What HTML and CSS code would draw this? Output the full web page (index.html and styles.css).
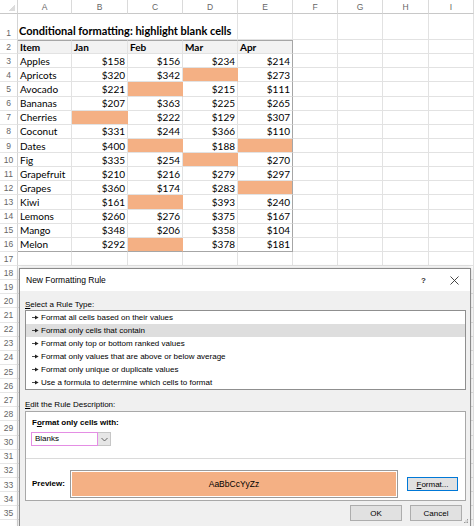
FILE: index.html
```html
<!DOCTYPE html>
<html>
<head>
<meta charset="utf-8">
<link rel="stylesheet" href="styles.css">
</head>
<body>
<div class="sheet">
  <div class="corner"></div>
  <div class="ch">A</div><div class="ch">B</div><div class="ch">C</div><div class="ch">D</div><div class="ch">E</div><div class="ch">F</div><div class="ch">G</div><div class="ch">H</div><div class="ch">I</div>

  <div class="rh">1</div><div class="c title">Conditional formatting: highlight blank cells</div><div class="c"></div><div class="c"></div><div class="c"></div><div class="c"></div><div class="c"></div>

  <div class="rh">2</div><div class="c hd tl">Item</div><div class="c hd tt">Jan</div><div class="c hd tt">Feb</div><div class="c hd tt">Mar</div><div class="c hd tt tr">Apr</div><div class="c"></div><div class="c"></div><div class="c"></div><div class="c"></div>

  <div class="rh">3</div><div class="c">Apples</div><div class="c n">$158</div><div class="c n">$156</div><div class="c n">$234</div><div class="c n tr">$214</div><div class="c"></div><div class="c"></div><div class="c"></div><div class="c"></div>
  <div class="rh">4</div><div class="c">Apricots</div><div class="c n">$320</div><div class="c n">$342</div><div class="c o"></div><div class="c n tr">$273</div><div class="c"></div><div class="c"></div><div class="c"></div><div class="c"></div>
  <div class="rh">5</div><div class="c">Avocado</div><div class="c n">$221</div><div class="c o"></div><div class="c n">$215</div><div class="c n tr">$111</div><div class="c"></div><div class="c"></div><div class="c"></div><div class="c"></div>
  <div class="rh">6</div><div class="c">Bananas</div><div class="c n">$207</div><div class="c n">$363</div><div class="c n">$225</div><div class="c n tr">$265</div><div class="c"></div><div class="c"></div><div class="c"></div><div class="c"></div>
  <div class="rh">7</div><div class="c">Cherries</div><div class="c o"></div><div class="c n">$222</div><div class="c n">$129</div><div class="c n tr">$307</div><div class="c"></div><div class="c"></div><div class="c"></div><div class="c"></div>
  <div class="rh">8</div><div class="c">Coconut</div><div class="c n">$331</div><div class="c n">$244</div><div class="c n">$366</div><div class="c n tr">$110</div><div class="c"></div><div class="c"></div><div class="c"></div><div class="c"></div>
  <div class="rh">9</div><div class="c">Dates</div><div class="c n">$400</div><div class="c o"></div><div class="c n">$188</div><div class="c o tr"></div><div class="c"></div><div class="c"></div><div class="c"></div><div class="c"></div>
  <div class="rh">10</div><div class="c">Fig</div><div class="c n">$335</div><div class="c n">$254</div><div class="c o"></div><div class="c n tr">$270</div><div class="c"></div><div class="c"></div><div class="c"></div><div class="c"></div>
  <div class="rh">11</div><div class="c">Grapefruit</div><div class="c n">$210</div><div class="c n">$216</div><div class="c n">$279</div><div class="c n tr">$297</div><div class="c"></div><div class="c"></div><div class="c"></div><div class="c"></div>
  <div class="rh">12</div><div class="c">Grapes</div><div class="c n">$360</div><div class="c n">$174</div><div class="c n">$283</div><div class="c o tr"></div><div class="c"></div><div class="c"></div><div class="c"></div><div class="c"></div>
  <div class="rh">13</div><div class="c">Kiwi</div><div class="c n">$161</div><div class="c o"></div><div class="c n">$393</div><div class="c n tr">$240</div><div class="c"></div><div class="c"></div><div class="c"></div><div class="c"></div>
  <div class="rh">14</div><div class="c">Lemons</div><div class="c n">$260</div><div class="c n">$276</div><div class="c n">$375</div><div class="c n tr">$167</div><div class="c"></div><div class="c"></div><div class="c"></div><div class="c"></div>
  <div class="rh">15</div><div class="c">Mango</div><div class="c n">$348</div><div class="c n">$206</div><div class="c n">$358</div><div class="c n tr">$104</div><div class="c"></div><div class="c"></div><div class="c"></div><div class="c"></div>
  <div class="rh">16</div><div class="c bb">Melon</div><div class="c n bb">$292</div><div class="c o bb"></div><div class="c n bb">$378</div><div class="c n tr bb">$181</div><div class="c"></div><div class="c"></div><div class="c"></div><div class="c"></div>
  <div class="rh">17</div><div class="c"></div><div class="c"></div><div class="c"></div><div class="c"></div><div class="c"></div><div class="c"></div><div class="c"></div><div class="c"></div><div class="c"></div>

  <div class="rh">18</div><div class="c fill"></div>
  <div class="rh">19</div><div class="c fill"></div>
  <div class="rh">20</div><div class="c fill"></div>
  <div class="rh">21</div><div class="c fill"></div>
  <div class="rh">22</div><div class="c fill"></div>
  <div class="rh">23</div><div class="c fill"></div>
  <div class="rh">24</div><div class="c fill"></div>
  <div class="rh">25</div><div class="c fill"></div>
  <div class="rh">26</div><div class="c fill"></div>
  <div class="rh">27</div><div class="c fill"></div>
  <div class="rh">28</div><div class="c fill"></div>
  <div class="rh">29</div><div class="c fill"></div>
  <div class="rh">30</div><div class="c fill"></div>
  <div class="rh">31</div><div class="c fill"></div>
  <div class="rh">32</div><div class="c fill"></div>
  <div class="rh">33</div><div class="c fill"></div>
  <div class="rh">34</div><div class="c fill"></div>
  <div class="rh">35</div><div class="c fill"></div>
  <div class="rh"></div><div class="c fill"></div>
  <div class="rh"></div><div class="c fill"></div>
</div>

<div class="dlg">
  <div class="dlg-title">
    <span class="title-text">New Formatting Rule</span>
    <span class="help">?</span>
    <svg class="close" width="9" height="9" viewBox="0 0 9 9"><path d="M0.5 0.5L8.5 8.5M8.5 0.5L0.5 8.5" stroke="#333" stroke-width="0.9" fill="none"/></svg>
  </div>
  <div class="dlg-body">
    <div class="lbl"><u>S</u>elect a Rule Type:</div>
    <div class="list">
      <div class="item"><svg class="arr" width="7" height="5" viewBox="0 0 7 5"><path d="M0 2.5H3.5" stroke="#222" stroke-width="0.8"/><path d="M3 0.6L6.6 2.5L3 4.4Z" fill="#222"/></svg>Format all cells based on their values</div>
      <div class="item sel"><svg class="arr" width="7" height="5" viewBox="0 0 7 5"><path d="M0 2.5H3.5" stroke="#222" stroke-width="0.8"/><path d="M3 0.6L6.6 2.5L3 4.4Z" fill="#222"/></svg>Format only cells that contain</div>
      <div class="item"><svg class="arr" width="7" height="5" viewBox="0 0 7 5"><path d="M0 2.5H3.5" stroke="#222" stroke-width="0.8"/><path d="M3 0.6L6.6 2.5L3 4.4Z" fill="#222"/></svg>Format only top or bottom ranked values</div>
      <div class="item"><svg class="arr" width="7" height="5" viewBox="0 0 7 5"><path d="M0 2.5H3.5" stroke="#222" stroke-width="0.8"/><path d="M3 0.6L6.6 2.5L3 4.4Z" fill="#222"/></svg>Format only values that are above or below average</div>
      <div class="item"><svg class="arr" width="7" height="5" viewBox="0 0 7 5"><path d="M0 2.5H3.5" stroke="#222" stroke-width="0.8"/><path d="M3 0.6L6.6 2.5L3 4.4Z" fill="#222"/></svg>Format only unique or duplicate values</div>
      <div class="item"><svg class="arr" width="7" height="5" viewBox="0 0 7 5"><path d="M0 2.5H3.5" stroke="#222" stroke-width="0.8"/><path d="M3 0.6L6.6 2.5L3 4.4Z" fill="#222"/></svg>Use a formula to determine which cells to format</div>
    </div>
    <div class="lbl lbl2"><u>E</u>dit the Rule Description:</div>
    <div class="box">
      <div class="box-top">
        <div class="blbl">F<u>o</u>rmat only cells with:</div>
        <div class="combo">
          <div class="combo-field">Blanks</div>
          <div class="combo-btn"><svg width="7" height="5" viewBox="0 0 7 5"><path d="M0.5 1L3.5 4L6.5 1" stroke="#555" stroke-width="0.9" fill="none"/></svg></div>
        </div>
      </div>
      <div class="box-bottom">
        <div class="blbl plbl">Preview:</div>
        <div class="preview"><div class="preview-in">AaBbCcYyZz</div></div>
        <div class="btn fmt"><u>F</u>ormat...</div>
      </div>
    </div>
    <div class="btns">
      <div class="btn">OK</div>
      <div class="btn">Cancel</div>
    </div>
  </div>
  <svg class="grip" width="5" height="5" viewBox="0 0 5 5"><rect x="3" y="0" width="1" height="1" fill="#999"/><rect x="1.5" y="1.5" width="1" height="1" fill="#999"/><rect x="3" y="1.5" width="1" height="1" fill="#999"/><rect x="0" y="3" width="1" height="1" fill="#999"/><rect x="1.5" y="3" width="1" height="1" fill="#999"/><rect x="3" y="3" width="1" height="1" fill="#999"/></svg>
</div>
</body>
</html>
```
FILE: styles.css
```css
html, body {
  margin: 0;
  padding: 0;
  background: #fff;
  overflow: hidden;
}
body {
  width: 474px;
  height: 526px;
  position: relative;
}
.sheet {
  display: grid;
  grid-template-columns: 18px 54px 56px 55px 55px 55px 45px 45px 46px 45px;
  grid-template-rows: 14px 26px repeat(36, 14.13px);
  font-family: Lato, "Liberation Sans", sans-serif;
  font-size: 10px;
  color: #000;
}
.corner {
  box-sizing: border-box;
  border-right: 1px solid #d4d4d4;
  border-bottom: 1px solid #c8c8c8;
  background: linear-gradient(135deg, #fff 0, #fff 62%, #dcdcdc 63%, #dcdcdc 100%);
  background-size: 9px 9px;
  background-position: right 2px bottom 2px;
  background-repeat: no-repeat;
}
.ch {
  box-sizing: border-box;
  display: flex;
  align-items: center;
  justify-content: center;
  border-right: 1px solid #dadada;
  border-bottom: 1px solid #c8c8c8;
  color: #666;
  font-family: "Liberation Sans", sans-serif;
  font-size: 8.5px;
  background: #fff;
}
.rh {
  box-sizing: border-box;
  display: flex;
  align-items: flex-end;
  justify-content: center;
  border-right: 1px solid #d4d4d4;
  border-bottom: 1px solid #e6e6e6;
  color: #666;
  font-family: "Liberation Sans", sans-serif;
  font-size: 8.5px;
  line-height: 12px;
  padding-bottom: 0.5px;
}
.c {
  box-sizing: border-box;
  display: flex;
  align-items: flex-end;
  border-right: 1px solid #e2e2e2;
  border-bottom: 1px solid #e2e2e2;
  padding: 0 2px 0.5px 2px;
  line-height: 12px;
  white-space: nowrap;
  overflow: hidden;
}
.title {
  grid-column: span 4;
  font-weight: bold;
  font-size: 11px;
  overflow: visible;
  padding-bottom: 2px;
  padding-left: 1px;
}
.hd {
  font-weight: bold;
  background: #f2f2f2;
}
.tt {
  border-top: 1px solid #a6a6a6;
}
.tl {
  border-top: 1px solid #a6a6a6;
}
.tr {
  border-right: 1px solid #a6a6a6;
}
.bb {
  border-bottom: 1px solid #a6a6a6;
}
.n {
  justify-content: flex-end;
}
.o {
  background: #f4b084;
  border-right-color: #f4b084;
}
.o.tr {
  border-right-color: #a6a6a6;
}
.o.bb {
  border-bottom-color: #a6a6a6;
}
.fill {
  grid-column: span 9;
}

/* dialog */
.dlg {
  position: absolute;
  left: 19px;
  top: 268px;
  width: 452px;
  height: 272px;
  box-sizing: border-box;
  border: 1px solid #8a8a8a;
  background: #f0f0f0;
  box-shadow: 0 0 4px rgba(0, 0, 0, 0.22);
  font-family: "Liberation Sans", sans-serif;
  font-size: 8px;
  color: #000;
}
.dlg-title {
  height: 22px;
  background: #fff;
  display: flex;
  align-items: center;
  padding-left: 6px;
  padding-right: 11px;
  font-size: 8.5px;
}
.title-text {
  flex: 1;
}
.help {
  font-size: 8px;
  font-weight: bold;
  color: #333;
  margin-right: 24px;
}
.close {
  display: block;
}
.dlg-body {
  display: flex;
  flex-direction: column;
  padding: 8px 4px 0 5px;
}
.lbl {
  line-height: 11px;
  height: 11px;
}
.lbl2 {
  margin-top: 9px;
  line-height: 12px;
  height: 12px;
}
.list {
  border: 1px solid #8f8f8f;
  background: #fff;
}
.item {
  height: 13px;
  line-height: 13px;
  padding-left: 6px;
  white-space: nowrap;
  display: flex;
  align-items: center;
}
.item.sel {
  background: #dedede;
}
.arr {
  display: block;
  margin-right: 2px;
}
.box {
  border: 1px solid #a8a8a8;
  background: #fff;
}
.box-top {
  height: 47px;
  box-sizing: border-box;
  padding: 5px 5px 0 5px;
  border-bottom: 1px solid #dadada;
}
.blbl {
  font-weight: bold;
  line-height: 12px;
  padding-left: 1px;
}
.combo {
  margin-top: 3px;
  display: flex;
  height: 14px;
}
.combo-field {
  width: 67px;
  box-sizing: border-box;
  border: 1px solid #e48ee4;
  background: #fff;
  padding-left: 3px;
  line-height: 12px;
}
.combo-btn {
  width: 13px;
  box-sizing: border-box;
  border: 1px solid #c6c6c6;
  border-left: none;
  background: #e6e6e6;
  display: flex;
  align-items: center;
  justify-content: center;
}
.box-bottom {
  height: 41px;
  box-sizing: border-box;
  padding: 11px 0 0 6px;
  display: flex;
  align-items: flex-start;
}
.plbl {
  width: 38px;
  padding-left: 0;
  margin-top: 8px;
}
.preview {
  width: 328px;
  height: 28px;
  box-sizing: border-box;
  border: 1px solid #9a9a9a;
  padding: 1px;
  background: #fff;
}
.preview-in {
  height: 100%;
  background: #f4b084;
  display: flex;
  align-items: center;
  justify-content: center;
  font-size: 8.5px;
}
.btn {
  box-sizing: border-box;
  width: 52px;
  height: 16px;
  border: 1px solid #adadad;
  background: #e1e1e1;
  display: flex;
  align-items: center;
  justify-content: center;
}
.fmt {
  width: 51px;
  height: 14px;
  margin-left: 9px;
  margin-top: 7px;
  border: 1px solid #0078d7;
  box-shadow: inset 0 0 0 1px #e1e1e1;
}
.btns {
  display: flex;
  justify-content: flex-end;
  gap: 8px;
  margin-top: 4px;
  padding-right: 4px;
}
.grip {
  position: absolute;
  right: 1px;
  top: 250px;
}
```
